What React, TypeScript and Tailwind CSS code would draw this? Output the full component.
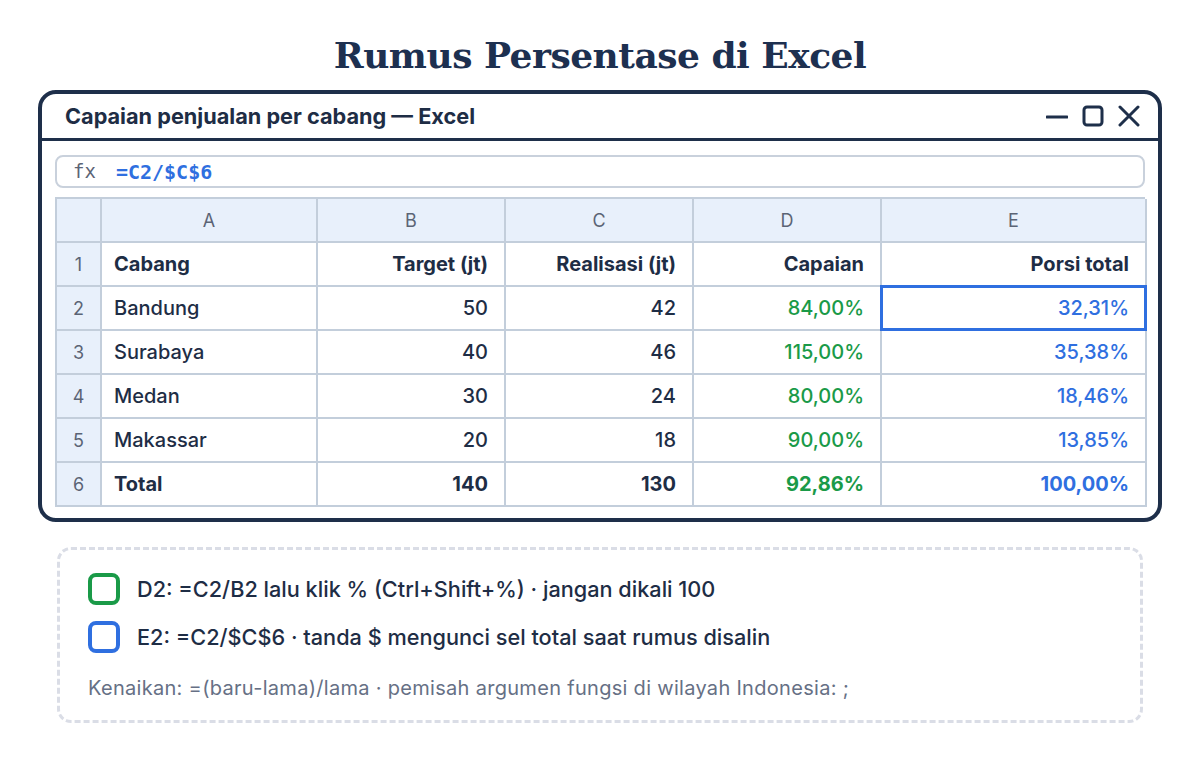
import React from "react";

const rows = [
  { n: 2, a: "Bandung", b: "50", c: "42", d: "84,00%", e: "32,31%" },
  { n: 3, a: "Surabaya", b: "40", c: "46", d: "115,00%", e: "35,38%" },
  { n: 4, a: "Medan", b: "30", c: "24", d: "80,00%", e: "18,46%" },
  { n: 5, a: "Makassar", b: "20", c: "18", d: "90,00%", e: "13,85%" },
];

const cell = "border-[#c3cedb] border-r-2 border-b-2 h-[44px] flex items-center";
const hdr = `${cell} bg-[#e8f0fb] justify-center text-[18px] text-[#5b6475] font-normal`;

export default function App() {
  return (
    <div
      className="w-[1200px] h-[760px] bg-white flex flex-col items-center text-[#1e2d45]"
      style={{ fontFamily: "Inter, 'Noto Sans', sans-serif" }}
    >
      <h1
        className="mt-[30px] h-[50px] text-[36px] font-bold leading-[50px] text-[#1d3050] tracking-[-0.5px]"
        style={{ fontFamily: "'DejaVu Serif', 'Liberation Serif', serif" }}
      >
        Rumus Persentase di Excel
      </h1>
      <div className="mt-[10px] w-[1124px] h-[432px] border-4 border-[#1e2f4a] rounded-[18px] flex flex-col">
        <div className="h-[47px] border-b-[3px] border-[#1e2f4a] flex items-center justify-between pl-[23px] pr-[18px]">
          <span className="text-[21.7px] font-bold">
            Capaian penjualan per cabang — Excel
          </span>
          <div className="flex items-center gap-[14px]">
            <svg width="22" height="22" viewBox="0 0 22 22">
              <line x1="1" y1="12" x2="21" y2="12" stroke="#1e2f4a" strokeWidth="3" strokeLinecap="round" />
            </svg>
            <svg width="22" height="22" viewBox="0 0 22 22">
              <rect x="2" y="2" width="18" height="18" rx="3" fill="none" stroke="#1e2f4a" strokeWidth="3" />
            </svg>
            <svg width="22" height="22" viewBox="0 0 22 22">
              <path d="M2 2 L20 20 M20 2 L2 20" stroke="#1e2f4a" strokeWidth="3" strokeLinecap="round" />
            </svg>
          </div>
        </div>
        <div className="px-[13px] pt-[14px]">
          <div className="h-[33px] border-2 border-[#c9d1dc] rounded-[8px] flex items-center pl-[16px] gap-[20px]">
            <span
              className="text-[19px] text-[#5b6475]"
              style={{ fontFamily: "'DejaVu Sans Mono', monospace" }}
            >
              fx
            </span>
            <span
              className="text-[20px] font-bold text-[#2f6fe0]"
              style={{ fontFamily: "'DejaVu Sans Mono', monospace" }}
            >
              =C2/$C$6
            </span>
          </div>
          <div className="mt-[9px] w-[1090px] border-l-2 border-t-2 border-[#c3cedb] grid grid-cols-[45px_216px_188px_188px_188px_265px] text-[20px] font-medium">
            <div className={hdr} />
            {["A", "B", "C", "D", "E"].map((l) => (
              <div key={l} className={hdr}>
                {l}
              </div>
            ))}
            <div className={hdr}>1</div>
            <div className={`${cell} px-[12px] font-bold`}>Cabang</div>
            <div className={`${cell} px-[16px] justify-end font-bold`}>Target (jt)</div>
            <div className={`${cell} px-[16px] justify-end font-bold`}>Realisasi (jt)</div>
            <div className={`${cell} px-[16px] justify-end font-bold`}>Capaian</div>
            <div className={`${cell} px-[16px] justify-end font-bold`}>Porsi total</div>
            {rows.map((r) => (
              <React.Fragment key={r.n}>
                <div className={hdr}>{r.n}</div>
                <div className={`${cell} px-[12px]`}>{r.a}</div>
                <div className={`${cell} px-[16px] justify-end`}>{r.b}</div>
                <div className={`${cell} px-[16px] justify-end`}>{r.c}</div>
                <div className={`${cell} px-[16px] justify-end text-[#1a9a48]`}>{r.d}</div>
                <div className={`${cell} relative px-[16px] justify-end text-[#2f6fe0]`}>
                  {r.e}
                  {r.n === 2 && (
                    <div className="absolute left-[-2px] top-[-2px] right-[-2px] bottom-[-2px] border-[3px] border-[#2f6fe0]" />
                  )}
                </div>
              </React.Fragment>
            ))}
            <div className={hdr}>6</div>
            <div className={`${cell} px-[12px] font-bold`}>Total</div>
            <div className={`${cell} px-[16px] justify-end font-bold`}>140</div>
            <div className={`${cell} px-[16px] justify-end font-bold`}>130</div>
            <div className={`${cell} px-[16px] justify-end font-bold text-[#1a9a48]`}>92,86%</div>
            <div className={`${cell} px-[16px] justify-end font-bold text-[#2f6fe0]`}>100,00%</div>
          </div>
        </div>
      </div>
      <div className="mt-[25px] w-[1086px] h-[176px] border-[3px] border-dashed border-[#dadde6] rounded-[14px] flex flex-col pl-[28px] pt-[23px]">
        <div className="flex items-center gap-[17px] h-[32px]">
          <div className="w-[32px] h-[32px] border-4 border-[#1a9a48] rounded-[8px]" />
          <span className="text-[21.7px] font-medium">D2: =C2/B2 lalu klik % (Ctrl+Shift+%) · jangan dikali 100</span>
        </div>
        <div className="flex items-center gap-[17px] h-[32px] mt-[16px]">
          <div className="w-[32px] h-[32px] border-4 border-[#2f6fe0] rounded-[8px]" />
          <span className="text-[21.7px] font-medium">E2: =C2/$C$6 · tanda $ mengunci sel total saat rumus disalin</span>
        </div>
        <div className="mt-[20px] text-[20px] text-[#667085] tracking-[0.3px]">
          Kenaikan: =(baru-lama)/lama · pemisah argumen fungsi di wilayah Indonesia: ;
        </div>
      </div>
    </div>
  );
}
